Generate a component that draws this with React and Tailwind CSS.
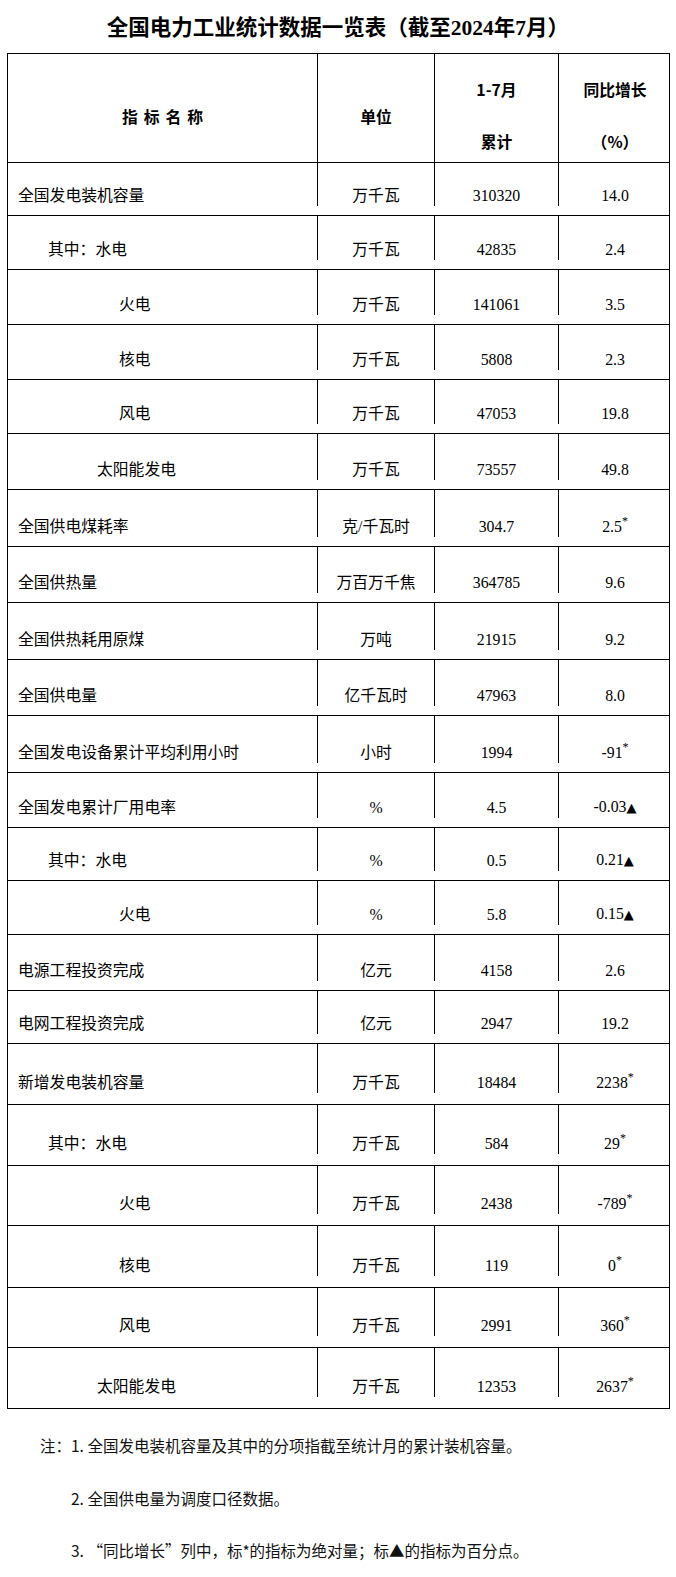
import React from 'react';

const rows = [
  { name: '全国发电装机容量', pad: 'pl-[10px]', unit: '万千瓦', value: '310320', growth: '14.0', h: 'h-[53px] pb-[9px]' },
  { name: '其中：水电', pad: 'pl-[40px]', unit: '万千瓦', value: '42835', growth: '2.4', h: 'h-[54px] pb-[9px]' },
  { name: '火电', pad: 'pl-[111px]', unit: '万千瓦', value: '141061', growth: '3.5', h: 'h-[55px] pb-[9px]' },
  { name: '核电', pad: 'pl-[111px]', unit: '万千瓦', value: '5808', growth: '2.3', h: 'h-[55px] pb-[9px]' },
  { name: '风电', pad: 'pl-[111px]', unit: '万千瓦', value: '47053', growth: '19.8', h: 'h-[54px] pb-[9px]' },
  { name: '太阳能发电', pad: 'pl-[89px]', unit: '万千瓦', value: '73557', growth: '49.8', h: 'h-[56px] pb-[9px]' },
  { name: '全国供电煤耗率', pad: 'pl-[10px]', unit: '克/千瓦时', value: '304.7', growth: '2.5', mark: '*', h: 'h-[57px] pb-[9px]' },
  { name: '全国供热量', pad: 'pl-[10px]', unit: '万百万千焦', value: '364785', growth: '9.6', h: 'h-[56px] pb-[9px]' },
  { name: '全国供热耗用原煤', pad: 'pl-[10px]', unit: '万吨', value: '21915', growth: '9.2', h: 'h-[57px] pb-[9px]' },
  { name: '全国供电量', pad: 'pl-[10px]', unit: '亿千瓦时', value: '47963', growth: '8.0', h: 'h-[56px] pb-[9px]' },
  { name: '全国发电设备累计平均利用小时', pad: 'pl-[10px]', unit: '小时', value: '1994', growth: '-91', mark: '*', h: 'h-[57px] pb-[9px]' },
  { name: '全国发电累计厂用电率', pad: 'pl-[10px]', unit: '%', value: '4.5', growth: '-0.03', mark: '▲', h: 'h-[55px] pb-[9px]' },
  { name: '其中：水电', pad: 'pl-[40px]', unit: '%', value: '0.5', growth: '0.21', mark: '▲', h: 'h-[53px] pb-[9px]' },
  { name: '火电', pad: 'pl-[111px]', unit: '%', value: '5.8', growth: '0.15', mark: '▲', h: 'h-[54px] pb-[9px]' },
  { name: '电源工程投资完成', pad: 'pl-[10px]', unit: '亿元', value: '4158', growth: '2.6', h: 'h-[56px] pb-[9px]' },
  { name: '电网工程投资完成', pad: 'pl-[10px]', unit: '亿元', value: '2947', growth: '19.2', h: 'h-[53px] pb-[9px]' },
  { name: '新增发电装机容量', pad: 'pl-[10px]', unit: '万千瓦', value: '18484', growth: '2238', mark: '*', h: 'h-[61px] pb-[11px]' },
  { name: '其中：水电', pad: 'pl-[40px]', unit: '万千瓦', value: '584', growth: '29', mark: '*', h: 'h-[61px] pb-[11px]' },
  { name: '火电', pad: 'pl-[111px]', unit: '万千瓦', value: '2438', growth: '-789', mark: '*', h: 'h-[60px] pb-[11px]' },
  { name: '核电', pad: 'pl-[111px]', unit: '万千瓦', value: '119', growth: '0', mark: '*', h: 'h-[62px] pb-[11px]' },
  { name: '风电', pad: 'pl-[111px]', unit: '万千瓦', value: '2991', growth: '360', mark: '*', h: 'h-[60px] pb-[11px]' },
  { name: '太阳能发电', pad: 'pl-[89px]', unit: '万千瓦', value: '12353', growth: '2637', mark: '*', h: 'h-[61px] pb-[11px]' },
];

const Growth = ({ growth, mark }) => {
  if (mark === '*') {
    return (
      <span>
        {growth}
        <sup className="text-[12px] -top-[7px]">*</sup>
      </span>
    );
  }
  if (mark === '▲') {
    return (
      <span>
        {growth}
        <span className="font-['DejaVu_Sans'] text-[13px]">▲</span>
      </span>
    );
  }
  return <span>{growth}</span>;
};

const App = () => {
  return (
    <div className="w-[676px] min-h-[1577px] bg-white text-black font-['Liberation_Serif','Noto_Sans_CJK_SC',serif] pt-[13px]">
      <h1 className="text-center text-[21.5px] leading-[30px] font-bold">
        全国电力工业统计数据一览表（截至2024年7月）
      </h1>

      <div className="mt-[10px] ml-[7px] w-[663px] border-x border-b border-black text-[15.8px] leading-[20px]">
        {/* header */}
        <div className="grid grid-cols-[309px_117px_124px_113px] h-[109px] border-t border-black font-['Noto_Sans_CJK_SC',sans-serif] font-bold">
          <div className="flex items-end justify-center pb-[35px] tracking-[6px] pl-[6px]">指标名称</div>
          <div className="flex items-end justify-center pb-[35px] border-l border-black">单位</div>
          <div className="flex flex-col items-center justify-end gap-[32px] pb-[10px] border-l border-black">
            <span>1-7月</span>
            <span>累计</span>
          </div>
          <div className="flex flex-col items-center justify-end gap-[32px] pb-[10px] border-l border-black">
            <span>同比增长</span>
            <span>（%）</span>
          </div>
        </div>

        {rows.map((r, i) => (
          <div key={i} className={`grid grid-cols-[309px_117px_124px_113px] border-t border-black ${r.h}`}>
            <div className={`flex items-end ${r.pad}`}>{r.name}</div>
            <div className="flex items-end justify-center border-l border-black">{r.unit}</div>
            <div className="flex items-end justify-center border-l border-black">{r.value}</div>
            <div className="flex items-end justify-center border-l border-black">
              <Growth growth={r.growth} mark={r.mark} />
            </div>
          </div>
        ))}
      </div>

      <div className="font-['Noto_Sans_CJK_SC',sans-serif] text-[15.5px] leading-[20px] text-[#111] pt-[26px]">
        <p className="pl-[40px]">注：1. 全国发电装机容量及其中的分项指截至统计月的累计装机容量。</p>
        <p className="pl-[71px] mt-[33px]">2. 全国供电量为调度口径数据。</p>
        <p className="pl-[71px] mt-[32px]">3. “同比增长”列中，标*的指标为绝对量；标▲的指标为百分点。</p>
      </div>
    </div>
  );
};

export default App;
